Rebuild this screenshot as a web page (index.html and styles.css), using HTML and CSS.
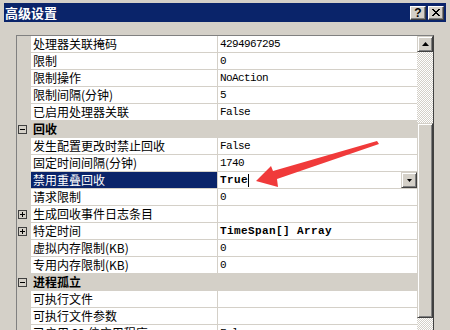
FILE: index.html
```html
<!DOCTYPE html>
<html lang="zh-CN">
<head>
<meta charset="utf-8">
<title>高级设置</title>
<link rel="stylesheet" href="styles.css">
</head>
<body>
<div class="window">
  <div class="titlebar">
    <span class="title">高级设置</span>
    <div class="tbtns">
      <div class="tbtn"><span class="q">?</span></div>
      <div class="tbtn">
        <svg width="8" height="7" viewBox="0 0 8 7"><path d="M0 0h2v1h-2zM6 0h2v1h-2zM1 1h2v1h-2zM5 1h2v1h-2zM2 2h4v1h-4zM3 3h2v1h-2zM2 4h4v1h-4zM1 5h2v1h-2zM5 5h2v1h-2zM0 6h2v1h-2zM6 6h2v1h-2z" fill="#000"/></svg>
      </div>
    </div>
  </div>
  <div class="content">
    <div class="grid">
      <div class="rows">
        <div class="row"><div class="gut"></div><div class="name">处理器关联掩码</div><div class="val">4294967295</div></div>
        <div class="row"><div class="gut"></div><div class="name">限制</div><div class="val">0</div></div>
        <div class="row"><div class="gut"></div><div class="name">限制操作</div><div class="val">NoAction</div></div>
        <div class="row"><div class="gut"></div><div class="name">限制间隔(分钟)</div><div class="val">5</div></div>
        <div class="row"><div class="gut"></div><div class="name">已启用处理器关联</div><div class="val">False</div></div>
        <div class="row cat"><div class="gut"><span class="box minus"></span></div><div class="name">回收</div></div>
        <div class="row"><div class="gut"></div><div class="name">发生配置更改时禁止回收</div><div class="val">False</div></div>
        <div class="row"><div class="gut"></div><div class="name">固定时间间隔(分钟)</div><div class="val">1740</div></div>
        <div class="row sel"><div class="gut"></div><div class="name">禁用重叠回收</div><div class="val"><span class="b">True</span><span class="caret"></span><span class="dd"><svg width="5" height="3" viewBox="0 0 5 3"><path d="M0 0h5L2.5 3z" fill="#000"/></svg></span></div></div>
        <div class="row"><div class="gut"></div><div class="name">请求限制</div><div class="val">0</div></div>
        <div class="row"><div class="gut"><span class="box plus"></span></div><div class="name">生成回收事件日志条目</div><div class="val"></div></div>
        <div class="row"><div class="gut"><span class="box plus"></span></div><div class="name">特定时间</div><div class="val"><span class="b">TimeSpan[] Array</span></div></div>
        <div class="row"><div class="gut"></div><div class="name">虚拟内存限制(KB)</div><div class="val">0</div></div>
        <div class="row"><div class="gut"></div><div class="name">专用内存限制(KB)</div><div class="val">0</div></div>
        <div class="row cat"><div class="gut"><span class="box minus"></span></div><div class="name">进程孤立</div></div>
        <div class="row"><div class="gut"></div><div class="name">可执行文件</div><div class="val"></div></div>
        <div class="row"><div class="gut"></div><div class="name">可执行文件参数</div><div class="val"></div></div>
        <div class="row"><div class="gut"></div><div class="name">已启用 32 位应用程序</div><div class="val">False</div></div>
      </div>
      <div class="sb">
        <div class="sbtn"><svg width="7" height="4" viewBox="0 0 7 4"><path d="M3.5 0L7 4H0z" fill="#000"/></svg></div>
        <div class="track t1"></div>
        <div class="thumb"></div>
        <div class="track t2"></div>
      </div>
    </div>
  </div>
</div>
<svg class="arrow" width="450" height="330" viewBox="0 0 450 330">
  <path d="M256 181 L271 166 L273 171 L377 141 L379 144 L277 179 L278 187 Z" fill="#F03A3A"/>
</svg>
</body>
</html>
```
FILE: styles.css
```css
* { box-sizing: border-box; margin: 0; padding: 0; }
html, body { width: 450px; height: 330px; overflow: hidden; }
body {
  background: #D4D0C8;
  font-family: "Noto Sans CJK SC", sans-serif;
  position: relative;
}
.window {
  height: 330px;
  padding: 3px 4px 0 4px;
  display: flex;
  flex-direction: column;
}
.titlebar {
  height: 19px;
  flex: none;
  background: #0A246A;
  display: flex;
  align-items: center;
  justify-content: space-between;
  padding: 0 2px 0 1px;
}
.title {
  color: #fff;
  font-weight: bold;
  font-size: 13px;
  line-height: 19px;
}
.tbtns { display: flex; gap: 2px; }
.tbtn {
  width: 16px;
  height: 14px;
  background: #D4D0C8;
  border: 1px solid;
  border-color: #fff #404040 #404040 #fff;
  box-shadow: inset -1px -1px #808080;
  display: flex;
  align-items: center;
  justify-content: center;
}
.q {
  font-family: "Liberation Sans", sans-serif;
  font-weight: bold;
  font-size: 12px;
  line-height: 12px;
  color: #000;
}
.content {
  flex: 1;
  min-height: 0;
  padding: 13px 0 0 12px;
}
.grid {
  width: 418px;
  height: 100%;
  display: flex;
  border-top: 1px solid #808080;
  border-left: 1px solid #808080;
  border-right: 1px solid #404040;
  overflow: hidden;
}
.rows { width: 400px; display: flex; flex-direction: column; }
.row {
  display: grid;
  grid-template-columns: 14px 187px 199px;
  height: 17px;
  flex: none;
}
.gut { display: flex; align-items: center; padding-left: 1px; }
.name {
  background: #fff;
  border-bottom: 1px solid #D4D0C8;
  border-right: 1px solid #D4D0C8;
  padding-left: 2px;
  font-size: 12px;
  line-height: 16px;
  color: #000;
  white-space: nowrap;
  overflow: hidden;
}
.val {
  background: #fff;
  border-bottom: 1px solid #D4D0C8;
  padding-left: 2px;
  font-family: "Liberation Mono", monospace;
  font-size: 11px;
  letter-spacing: -0.6px;
  line-height: 16px;
  color: #000;
  display: flex;
  align-items: center;
  white-space: pre;
}
.b { font-weight: bold; letter-spacing: 0.4px; }
.caret { width: 1px; height: 13px; background: #000; margin-left: 0; }
.dd {
  margin-left: auto;
  width: 16px;
  height: 16px;
  background: #D4D0C8;
  border: 1px solid;
  border-color: #D4D0C8 #404040 #404040 #D4D0C8;
  box-shadow: inset 1px 1px #fff, inset -1px -1px #808080;
  display: flex;
  align-items: center;
  justify-content: center;
}
.row.cat .name {
  grid-column: 2 / 4;
  background: #D4D0C8;
  border: none;
  font-weight: bold;
}
.row.sel .name { background: #0A246A; color: #fff; }
.box {
  width: 9px;
  height: 9px;
  border: 1px solid #404040;
  position: relative;
  display: block;
}
.box::before {
  content: "";
  position: absolute;
  left: 1px;
  top: 3px;
  width: 5px;
  height: 1px;
  background: #000;
}
.box.plus::after {
  content: "";
  position: absolute;
  left: 3px;
  top: 1px;
  width: 1px;
  height: 5px;
  background: #000;
}
.sb { width: 16px; display: flex; flex-direction: column; }
.sbtn, .thumb {
  background: #D4D0C8;
  border: 1px solid;
  border-color: #D4D0C8 #404040 #404040 #D4D0C8;
  box-shadow: inset 1px 1px #fff, inset -1px -1px #808080;
}
.sbtn { height: 16px; display: flex; align-items: center; justify-content: center; flex: none; }
.thumb { height: 195px; flex: none; }
.track {
  background: repeating-conic-gradient(#fff 0 25%, #D4D0C8 0 50%) 0 0 / 2px 2px;
}
.t1 { height: 71px; flex: none; }
.t2 { flex: 1; }
.arrow { position: absolute; left: 0; top: 0; pointer-events: none; }
```
